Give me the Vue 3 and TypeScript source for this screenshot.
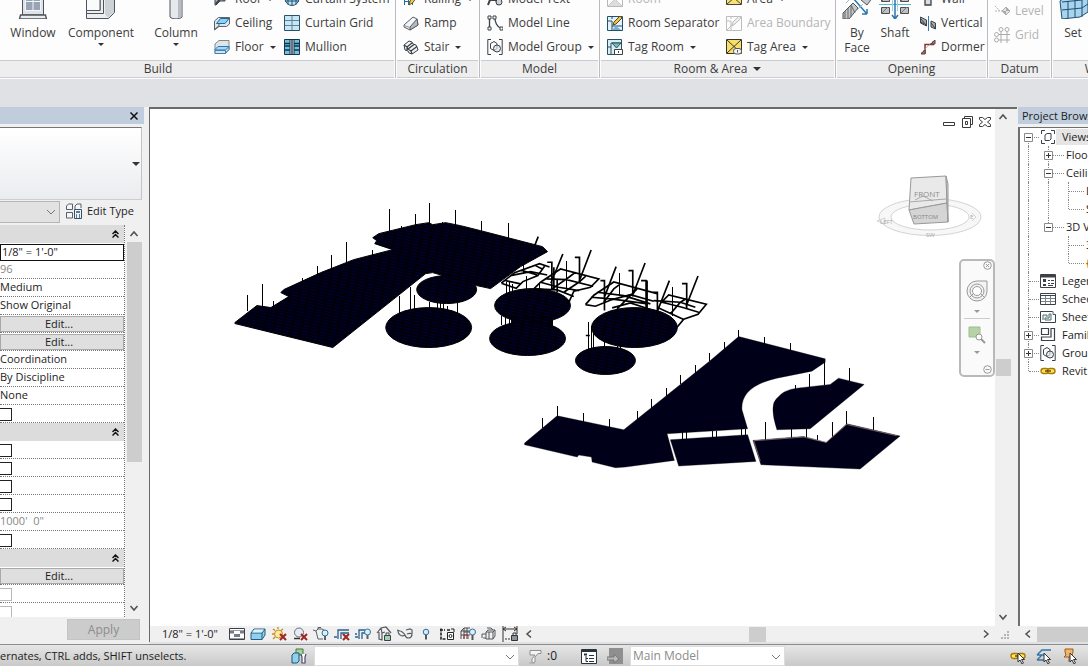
<script setup lang="ts">
import { ref } from 'vue'

interface Tool { icon: string; label: string; menu?: boolean; off?: boolean }
interface Big { icon: string; label: string; menu?: boolean; width: number }
interface Prop { kind: 'head' | 'input' | 'text' | 'edit' | 'check'; value?: string; name: string; dim?: boolean }
interface Node { label: string; depth: number; icon?: string; box?: '+' | '-'; bold?: boolean; sel?: boolean; last?: boolean }

const K = '#3b4148'
const icons: Record<string, string> = {
  roof: `<path d="M1 2h14v6l-4-1v3H6l-4 4H1z" fill="#a9b1ba" stroke="${K}"/><path d="M2 13l5-6 3 2" fill="none" stroke="${K}" stroke-width="2"/>`,
  ceiling: `<path d="M.5 6l4-3.500h11v6.500l-3 2.500H5L.500 15z" fill="#dfe5ea" stroke="#59636c"/><path d="M2.500 8.500l4-5h8.500l-4 5z" fill="#8fd0f5" stroke="#246a99"/><path d="M5 12V9M.500 14.500l4-3.500" stroke="#59636c"/>`,
  floor: `<path d="M1 5l4-3.500h10v9L11 14.500H1z" fill="#dfe4e9" stroke="#7d8790"/><path d="M1 10.500l3-3h11l-3.500 3.500H1z" fill="#a5d6f5" stroke="#2a78b0"/><path d="M1 11.500h10.500v3H1z" fill="#cfe5f4" stroke="#4381ac"/><path d="M11.500 14.500l3.500-4V7.500" fill="none" stroke="#4381ac"/>`,
  csystem: `<circle cx="8" cy="7.500" r="7" fill="#bfe2f5" stroke="#1d5273"/><path d="M8 .5v14M4 1.500v12M12 1.500v12M1 5h14M1 10h14" stroke="#1d5273" fill="none"/>`,
  cgrid: `<path d="M.500.500h15v15H.500z" fill="#c7e7f6" stroke="#2c5268"/><path d="M8 1v14M1 5.500h14M1 10.500h14" stroke="#5b8498"/>`,
  mullion: `<path d="M.500.500h15v15H.500z" fill="#71c1e6" stroke="#173547"/><path d="M6 .500h4v15H6z" fill="#eef7fb" stroke="#173547"/><path d="M8 1v14M1 4.500h5M10 4.500h5M1 7h5M10 7h5M1 11h5M10 11h5" stroke="#173547" stroke-width="1.300"/>`,
  railing: `<path d="M1.500 1v13M5.500 2v12M9.500 5v9M1 5.500h9M1 10.500h9" stroke="#236c94" fill="none"/><path d="M6 14l1-4 6-8 2.500 2-6 8z" fill="#f3c85a" stroke="#6b5320"/>`,
  ramp: `<path d="M1 10L10 2l4 2 1 6-8 5-6-3z" fill="#f4f5f6" stroke="#575e65"/><path d="M7 15v-3l7-8 1 6z" fill="#b3b9be" stroke="#575e65"/><path d="M1 10.500l6 2" fill="none" stroke="#8b9299"/>`,
  stair: `<path d="M1 6l5-4 3 1 1 2 3 1 1 2 1 3-6 4-3-1-1-2-3-1z" fill="#f0f2f4" stroke="${K}"/><path d="M1 6l3 2 5-4M4 8l1 2 6-4.500M5 10l3 2 6-4.500M8 12l1 3M4 8v3" fill="none" stroke="${K}" stroke-width="1.200"/>`,
  mtext: `<path d="M1 14L6 1l5 13M3 9h6" fill="none" stroke="${K}" stroke-width="2"/><circle cx="12" cy="11" r="3" fill="#ccd1d6" stroke="${K}"/>`,
  mline: `<path d="M2.500 3v10M7.500 2c1 6 2 9 6 11" fill="none" stroke="${K}" stroke-width="1.300"/><path d="M1 1h3v3H1zM1 12h3v3H1zM6 1h3v3H6zM13 12h3v3h-3z" fill="#fff" stroke="${K}"/>`,
  mgroup: `<path d="M4 .500H.800v15H4M12 .500h3.200v15H12" fill="none" stroke="${K}"/><path d="M3.500 4.500L7 2.500l3 2v5l-3 2-3.500-2z" fill="#fff" stroke="${K}"/><circle cx="10" cy="9.500" r="3.500" fill="#dde3e8" fill-opacity=".7" stroke="${K}"/>`,
  room: `<path d="M.500.500h15v15H.500zM1 15L15 1M1 1l14 14" fill="none" stroke="#b9b9b9"/><path d="M8 8l7 7H1z" fill="#ddd"/>`,
  rsep: `<path d="M.500 1.500h15v14H.500z" fill="#e3f1f8" stroke="#25506b"/><path d="M1 6h4v9M5 1v3M5 11h10" fill="none" stroke="#25506b"/><path d="M5 15l4-4 5 4z" fill="#6fb3d8"/><path d="M6 10l1-3 6-6 2 2-6 6z" fill="#f1c24c" stroke="#5d4a20"/>`,
  troom: `<path d="M.500.500h14v15H.500z" fill="#dcecf1" stroke="#25506b"/><path d="M4 4v11M4 4h10M1 8h3" fill="none" stroke="#25506b"/><path d="M5 4h9l-4.500 5z" fill="#7fbba9" stroke="#25506b"/><path d="M7.500 10.500h8v5h-8z" fill="#fff" stroke="${K}"/><path d="M11.500 12v2" stroke="${K}"/>`,
  area: `<path d="M.500.500h15v13H.500z" fill="#f7e27a" stroke="#4a4430"/><path d="M1 13L15 1M1 1l14 12" stroke="#4a4430" fill="none"/>`,
  abound: `<path d="M.500 1.500h15v14H.500zM1 6h4v9M5 1v3M1 15L15 1" fill="none" stroke="#bdbdbd"/><path d="M6 11l1-4 6-6 2 2-6 6z" fill="#eee" stroke="#bdbdbd"/>`,
  tarea: `<path d="M.500.500h15v14H.500z" fill="#f7e06a" stroke="#37352a"/><path d="M1 14L15 1M1 1l14 13" stroke="#37352a" fill="none"/><rect x="7.500" y="9.500" width="8" height="5.500" rx="2.500" fill="#f1f1f1" stroke="#54585c"/><path d="M11.500 11v2.500" stroke="#54585c"/>`,
  wall: `<path d="M1 2h4M11 2h4M5 8h6v6H5z" fill="#ddd" stroke="${K}" stroke-width="1.300"/>`,
  vertical: `<path d="M.500 2l6 3v6l-6-3zM11 6l4.500 2v6L11 12z" fill="#a5aab0" stroke="${K}"/><path d="M1 4l5 6M1 7l3 2M11 8l4 5" stroke="${K}"/><path d="M8.500 1v15" stroke="#3878ae"/>`,
  dormer: `<path d="M5 15V5.500h9" fill="none" stroke="#873532" stroke-width="1.500"/><path d="M1 15l4-4v4zM11 5l4-4v4z" fill="#888" stroke="#6b3a38"/><path d="M1 14L14 1" stroke="#b98b88" stroke-dasharray="2 1"/>`,
  level: `<path d="M1 3l5 5M1 8h14" stroke="#b5b5b5" stroke-dasharray="2 1"/><path d="M12 4l4 4-4 4-4-4z" fill="#e5e5e5" stroke="#aaa"/><path d="M12 4v4h4zM12 12V8H8z" fill="#aaa"/>`,
  grid: `<g fill="none" stroke="#ababab"><circle cx="7" cy="2.500" r="2"/><circle cx="13" cy="2.500" r="2"/><circle cx="2.500" cy="7.500" r="2"/><circle cx="2.500" cy="13" r="2"/><path d="M7 5v11M13 5v11M5 7.500h11M5 13h11"/></g>`,
  views: `<path d="M5 1.500H1.500V5M11 1.500h3.500V5M5 14.500H1.500V11M11 14.500h3.500V11" fill="none" stroke="${K}"/><path d="M5 6l2-1.500h4V10l-1.500 1.500H5z" fill="#fff" stroke="${K}"/>`,
  legend: `<path d="M.500 1.500h15v13H.500z" fill="#fff" stroke="${K}"/><path d="M1 3h14" stroke="${K}" stroke-width="3"/><path d="M3 6h3v3H3zM3 11h3v2H3z" fill="${K}"/><path d="M8 7.500h2M11 7.500h3M8 10.500h2M11 10.500h3M8 12.500h5" stroke="${K}"/>`,
  sched: `<path d="M.500 2.500h15v11H.500z" fill="#fff" stroke="${K}"/><path d="M1 4.500h14" stroke="${K}"/><path d="M1 7.500h14M1 10.500h14M5.500 5v8M10.500 5v8" stroke="#7c8288"/>`,
  sheet: `<path d="M.500 2.500h12l3 3v8H.500z" fill="#fff" stroke="${K}"/><path d="M3 11V6h4v2M5 11V9h4V5h2v6zM13 2.500v3h3" fill="#eef3f4" stroke="#4c6a70"/>`,
  family: `<path d="M1.500 1.500h7v6h-7zM11 1.500h3.500v12h-13V10H11z" fill="#fff" stroke="${K}" stroke-width="1.200"/>`,
  link: `<rect x="1" y="5.500" width="7.500" height="5" rx="2.500" fill="#ffe15a" stroke="#a67c08" stroke-width="1.400"/><rect x="7.500" y="5.500" width="7.500" height="5" rx="2.500" fill="#ffe15a" stroke="#a67c08" stroke-width="1.400"/><path d="M5 8h6" stroke="#5d4700" stroke-width="1.400"/>`,
  edittype: `<path d="M.500 3l2-2h4v5.500h-6zM9 6V3l2-2h4v4M.500 9.500h6v5.500h-6z" fill="#f4f6f8" stroke="#56606a"/><path d="M8.500 6.500h7v9h-7z" fill="#eaf3fa" stroke="#34506b"/><path d="M10 9h4M10 12h1M13 12h1M10 14h1M13 14h1" stroke="#34506b" stroke-width="1.300"/>`,
  detail: `<path d="M.500 2.500h15v11H.500z" fill="#fff" stroke="${K}"/><path d="M1 4.500h4v3H1zM11 4.500h4v3h-4zM5 8h6v3H5z" fill="#777d83"/><path d="M1 4.500h14M1 12.500h14" stroke="#9aa0a6"/>`,
  style: `<path d="M1 7l3-4h11v6l-3 4.500H1z" fill="#8ed0f2" stroke="#2a5d7d"/><path d="M1 7h11v6.500M12 7l3-4" fill="none" stroke="#2a5d7d"/><path d="M2 6.500L4.500 3.500h9.500l-2.500 3z" fill="#dff2fc"/>`,
  sun: `<path d="M7 1v2M2 3l2 1.500M1 8h2M2 13l2-2M12 3l-2 1.500" stroke="#c18b1c" stroke-width="1.300"/><circle cx="7.500" cy="8" r="4" fill="#ffe9a0" stroke="#c18b1c"/><path d="M9 8l6 6M15 8l-6 6" stroke="#9d2620" stroke-width="2"/>`,
  shadow: `<circle cx="7" cy="6.500" r="4.500" fill="#e4eef4" stroke="#67727b"/><path d="M2 12.500h6" stroke="#333" stroke-width="1.500"/><path d="M9 8l6 6M15 8l-6 6" stroke="#9d2620" stroke-width="2"/>`,
  render: `<path d="M0 4l3 1 2-2h4l2 1M3 5l2 8h5M5 3V1.500h3" fill="none" stroke="#5a6067"/><circle cx="12" cy="7" r="3" fill="#d4effd" stroke="#386e93"/><path d="M12 10v4" stroke="#5a6067" stroke-width="2"/>`,
  crop: `<path d="M0 11h3M4 13V4h11M7 13V7h8" fill="none" stroke="#27618f" stroke-width="1.300"/><path d="M9 8l6 6M15 8l-6 6" stroke="#9d2620" stroke-width="2"/>`,
  cropshow: `<path d="M0 11h3M4 13V4h6M7 13V7h3M0 8h2" fill="none" stroke="#27618f" stroke-width="1.300"/><circle cx="12.500" cy="6" r="3" fill="#d4effd" stroke="#386e93"/><path d="M12.500 9v4" stroke="#5a6067" stroke-width="2"/>`,
  lockview: `<path d="M1 7l4-5 5-1 5 6M3 6v7l3 1V7L5 2M6 7l3-1" fill="none" stroke="#54585c" stroke-width="1.200"/><path d="M8.500 9.500h6v5h-6z" fill="#9fd1b4" stroke="${K}"/><path d="M10 9V7h3v2" fill="none" stroke="${K}"/>`,
  glasses: `<path d="M0 4l3 1c1 0 4 2 5 4M1 5c0 4 4 6 7 4M8 9c1 4 6 4 7 0 0-2-3-2-5-1M9 4l4-1 2 1v4" fill="none" stroke="#5a6067" stroke-width="1.200"/>`,
  bulb: `<circle cx="8" cy="6" r="2.800" fill="#c9ecff" stroke="#386e93"/><path d="M8 9v4.500" stroke="#54585c" stroke-width="2"/>`,
  temp: `<path d="M1 4h5M2 2.500V13h5M8 4h4" fill="none" stroke="#222" stroke-width="1.600" stroke-dasharray="3 1"/><path d="M8.500 6.500h6v7h-6z" fill="#fff" stroke="#222"/><circle cx="11.500" cy="10" r="1.500" fill="none" stroke="#222"/><path d="M12 3h3v3" fill="none" stroke="#222"/>`,
  analytic: `<path d="M1 13V5l3-3h6M4 13V6h6M7 13V6M1 9h9M1 5h9M4 2v4M7 2v4" fill="none" stroke="#4b4a50"/><path d="M4 13V9h4v4" fill="none" stroke="#9d3d3a"/><circle cx="12.500" cy="6" r="3" fill="#d4effd" stroke="#386e93"/><path d="M12.500 9v5" stroke="#555" stroke-width="2"/>`,
  displace: `<path d="M5 6l2-2h7v6l-2 3H5zM5 6h7v7M12 6l2-2M8 6v7M1 8h4M2 12h3M1 8v4M6 2h4l2 2" fill="none" stroke="#54585c"/>`,
  reveal: `<path d="M1 0v16M15 0v8M1 3h14M4 1L1 3l3 2M12 1l3 2-3 2" fill="none" stroke="#333"/><path d="M3 13h5" stroke="#333" stroke-dasharray="2 1"/><path d="M9.500 9.500h6v5h-6z" fill="#8d9499" stroke="#333"/><path d="M11 9V7h3v2" fill="none" stroke="#333"/>`,
  worksets: `<path d="M5 1h7v6H5z" fill="#a7d49a" stroke="#3e7747"/><path d="M1 7l2-2h5v8l-2 2H1z" fill="#8ed0f0" stroke="#1f5573"/><path d="M10 6l1 3v6h3V9l1-3" fill="#fff" stroke="#4b4a70" stroke-width="1.200"/>`,
  filter: `<path d="M3 2.500h11v3h-3L8 9v5l-3 1v-4l3-4H3z" fill="#f4f4f4" stroke="#8f8f8f"/><path d="M2 15h6" stroke="#aaa"/>`,
  options: `<path d="M.500 1.500h15v14H.500z" fill="#fff" stroke="#26343d"/><path d="M1 3h14" stroke="#26343d" stroke-width="2"/><path d="M3 5.500h3v2H3z" fill="#26343d"/><path d="M8 7.500h5M8 10.500h5M5 8v5.500h2M5 10.500h2M8 13.500h5" fill="none" stroke="#26343d"/>`,
  addopt: `<path d="M2 0h14v16H2z" fill="#8f8f8f"/><path d="M0 9h7V6l5 5-5 4v-3H0z" fill="#b9b9b9" stroke="#777"/>`,
  selunder: `<path d="M1 7l5-5h9M1 7h8M1 12l5-5M1 12h7" fill="none" stroke="#3276a8" stroke-width="1.400"/>`,
  selpin: `<path d="M3 1h8v3l-1 3 2 2H2l2-2-1-3zM7 9v5" fill="#f3b469" stroke="#985d1c"/>`,
  cursor: `<path d="M8 5v9l2-2 2 4 1.500-1-2-3.500h3z" fill="#fff" stroke="#333"/>`,
  window: `<path d="M5.500-4h21v32h-21z" fill="#dfe3e9" stroke="#4d545b"/><path d="M8 0h16v24H8z" fill="#f3f5f7"/><path d="M9 0h14v23H9z" fill="#98a4b3"/><path d="M9 14.500h14M16 0v24" stroke="#f3f5f7"/><path d="M3.500 28h25l1 4h-27z" fill="#e9ecef" stroke="#4d545b" stroke-width="1.400"/>`,
  component: `<path d="M1.500 0h28v25.500l-6 6h-22v-8H15V0z" fill="#eceef0" stroke="#4d545b"/><path d="M20 0h9v25l-6 6-3-4z" fill="#cdd2d7"/><path d="M1.500 26.500h17V0" fill="none" stroke="#4d545b"/><path d="M1.500 0v23.500H15V0" fill="#fafbfb" stroke="#4d545b"/>`,
  column: `<path d="M10-4h12v34c-2 2.500-10 2.500-12 0z" fill="#e6e8ea" stroke="#4d545b"/><path d="M18-4h3.500v34l-3.500 1z" fill="#b6bcc2"/>`,
  byface: `<path d="M1 0l7 6M21 0l8 4 2-3-8-8z" fill="#888" stroke="#555"/><path d="M2 26L12 16l5 5-9 11H2z" fill="#c3c6ca" stroke="#555"/><path d="M4 32v-8M7 32V21M10 30V19M14 26l-4-8" stroke="#666"/><path d="M20 13l7-8 5 5-6 8z" fill="#c3c6ca" stroke="#555"/><path d="M12 11l14 16M26 27v-5M26 27h-5" stroke="#2e74ad" stroke-width="1.500" fill="none"/><path d="M5 16l8-8M16 23l6-6" stroke="#8ac4cc"/>`,
  shaft: `<g fill="#bdc0c4" stroke="#4d4d4d"><path d="M2.500 8.500h8v6h-8zM21.500 8.500h8v6h-8zM2.500 20.500h8v6h-8zM21.500 20.500h8v6h-8z"/></g><path d="M0 17.500h32" stroke="#54bdd3"/><path d="M3 14l6-6M22 14l6-6M3 26l6-6M22 26l6-6" stroke="#777"/><path d="M13.500 8v16M18.500 8v16" stroke="#9bd0dd"/><path d="M16 0v31M13 28l3 4 3-4" stroke="#2e74ad" stroke-width="1.500" fill="none"/>`,
  set: `<path d="M3 14l8-6h20v17l-8 5-18 2z" fill="#a9d4ef" stroke="#1f4f70"/><path d="M5 15l20-2v17M25 13l6-5M11 14v17M18 13v17M5 23l20-2 6-4" stroke="#1f4f70" fill="none"/>`,
}

const buildBig: Big[] = [
  { icon: 'window', label: 'Window', width: 66 },
  { icon: 'component', label: 'Component', menu: true, width: 70 },
  { icon: 'column', label: 'Column', menu: true, width: 80 },
]
const build: Tool[] = [
  { icon: 'roof', label: 'Roof', menu: true }, { icon: 'ceiling', label: 'Ceiling' }, { icon: 'floor', label: 'Floor', menu: true },
]
const curtain: Tool[] = [
  { icon: 'csystem', label: 'Curtain System' }, { icon: 'cgrid', label: 'Curtain Grid' }, { icon: 'mullion', label: 'Mullion' },
]
const circulation: Tool[] = [
  { icon: 'railing', label: 'Railing', menu: true }, { icon: 'ramp', label: 'Ramp' }, { icon: 'stair', label: 'Stair', menu: true },
]
const model: Tool[] = [
  { icon: 'mtext', label: 'Model Text' }, { icon: 'mline', label: 'Model Line' }, { icon: 'mgroup', label: 'Model Group', menu: true },
]
const room: Tool[] = [
  { icon: 'room', label: 'Room', off: true }, { icon: 'rsep', label: 'Room Separator' }, { icon: 'troom', label: 'Tag Room', menu: true },
]
const area: Tool[] = [
  { icon: 'area', label: 'Area', menu: true }, { icon: 'abound', label: 'Area Boundary', off: true }, { icon: 'tarea', label: 'Tag Area', menu: true },
]
const opening: Tool[] = [
  { icon: 'wall', label: 'Wall' }, { icon: 'vertical', label: 'Vertical' }, { icon: 'dormer', label: 'Dormer' },
]
const datum: Tool[] = [{ icon: 'level', label: 'Level', off: true }, { icon: 'grid', label: 'Grid', off: true }]

interface Panel { title: string; cls: string; menu?: boolean; big: Big[]; cols: Tool[][] }
const panels: Panel[] = [
  { title: 'Build', cls: 'p-build', big: buildBig, cols: [build, curtain] },
  { title: 'Circulation', cls: 'p-circ', big: [], cols: [circulation] },
  { title: 'Model', cls: 'p-model', big: [], cols: [model] },
  { title: 'Room & Area', cls: 'p-room', menu: true, big: [], cols: [room, area] },
  { title: 'Opening', cls: 'p-open', big: [{ icon: 'byface', label: 'By Face', width: 38 }, { icon: 'shaft', label: 'Shaft', width: 38 }], cols: [opening] },
  { title: 'Datum', cls: 'p-datum', big: [], cols: [datum] },
  { title: 'Work Plane', cls: 'p-work', big: [{ icon: 'set', label: 'Set', width: 36 }], cols: [] },
]

const scale = ref('1/8" = 1\'-0"')
const props: Prop[] = [
  { kind: 'head', name: 'Graphics' },
  { kind: 'input', name: 'View Scale' },
  { kind: 'text', name: 'Scale Value', value: '96', dim: true },
  { kind: 'text', name: 'Detail Level', value: 'Medium' },
  { kind: 'text', name: 'Parts Visibility', value: 'Show Original' },
  { kind: 'edit', name: 'Visibility Overrides' },
  { kind: 'edit', name: 'Graphic Display Options' },
  { kind: 'text', name: 'Discipline', value: 'Coordination' },
  { kind: 'text', name: 'Show Hidden Lines', value: 'By Discipline' },
  { kind: 'text', name: 'Analysis Display Style', value: 'None' },
  { kind: 'check', name: 'Sun Path' },
  { kind: 'head', name: 'Extents' },
  { kind: 'check', name: 'Crop View' },
  { kind: 'check', name: 'Crop Region Visible' },
  { kind: 'check', name: 'Annotation Crop' },
  { kind: 'check', name: 'Far Clip Active' },
  { kind: 'text', name: 'Far Clip Offset', value: "1000'  0\"", dim: true },
  { kind: 'check', name: 'Section Box' },
  { kind: 'head', name: 'Camera' },
  { kind: 'edit', name: 'Rendering Settings' },
  { kind: 'check', name: 'Locked Orientation', dim: true },
  { kind: 'check', name: 'Perspective', dim: true },
]

const tree: Node[] = [
  { label: 'Views (all)', depth: 0, icon: 'views', box: '-', sel: true },
  { label: 'Floor Plans', depth: 1, box: '+' },
  { label: 'Ceiling Plans', depth: 1, box: '-' },
  { label: 'Level 1', depth: 2 },
  { label: 'Site', depth: 2, last: true },
  { label: '3D Views', depth: 1, box: '-', last: true },
  { label: '3D View 1', depth: 2 },
  { label: '{3D}', depth: 2, bold: true, last: true },
  { label: 'Legends', depth: 0, icon: 'legend' },
  { label: 'Schedules/Quantities', depth: 0, icon: 'sched' },
  { label: 'Sheets (all)', depth: 0, icon: 'sheet' },
  { label: 'Families', depth: 0, icon: 'family', box: '+' },
  { label: 'Groups', depth: 0, icon: 'mgroup', box: '+' },
  { label: 'Revit Links', depth: 0, icon: 'link', last: true },
]

const viewTools = ['detail', 'style', 'sun', 'shadow', 'render', 'crop', 'cropshow', 'lockview', 'glasses', 'bulb', 'temp', 'analytic', 'displace', 'reveal']

type Post = [number, number, number]
const postsA: Post[] = [[79, 312, 362], [124, 279, 348], [157, 330, 350], [244, 262, 275], [289, 227, 255], [331, 192, 236], [376, 155, 218], [454, 177, 195], [505, 54, 128], [541, 105, 116], [585, 71, 110], [628, 36, 105], [665, 93, 105], [706, 57, 108], [742, 110, 120], [535, 315, 370], [568, 288, 358], [580, 312, 356], [625, 333, 354], [712, 336, 366], [650, 338, 354], [659, 338, 356], [670, 340, 356], [682, 345, 358]]
const postsB: Post[] = [[34, 0, 38], [70, 40, 48], [115, 6, 60], [94, 285, 312], [106, 290, 312], [117, 296, 310], [240, 290, 310], [246, 295, 320], [108, 185, 220], [117, 180, 220], [126, 190, 220], [160, 120, 160], [168, 165, 210], [206, 190, 215], [289, 120, 205], [448, 156, 225], [607, 198, 285], [355, 303, 385], [363, 315, 385], [369, 330, 385], [403, 360, 380], [440, 375, 382], [450, 372, 382]]
const postsC: Post[] = [[97, 322, 352], [142, 288, 320], [220, 307, 336], [298, 327, 352], [380, 303, 330], [424, 265, 292], [467, 232, 258], [511, 195, 222], [555, 162, 188], [598, 126, 152], [643, 93, 118], [685, 57, 80], [763, 79, 100], [841, 96, 120], [943, 152, 224], [898, 192, 230], [856, 225, 236], [1018, 174, 212], [766, 334, 388], [845, 355, 382], [889, 352, 382], [922, 373, 388], [967, 336, 382], [1009, 303, 345], [1090, 321, 360], [517, 365, 386], [528, 366, 386], [607, 362, 382], [618, 362, 382], [695, 357, 376], [706, 357, 376]]
</script>

<template>
  <div class="app">
    <header class="ribbon">
      <section v-for="p in panels" :key="p.title" class="panel" :class="p.cls">
        <div class="tools">
          <button v-for="b in p.big" :key="b.label" class="big" type="button" :style="{ width: b.width + 'px' }">
            <svg width="32" height="32" viewBox="0 0 32 32" v-html="icons[b.icon]" />
            <span>{{ b.label }}</span>
            <i v-if="b.menu" class="tri" />
          </button>
          <div v-for="(c, i) in p.cols" :key="i" class="col">
            <button v-for="t in c" :key="t.label" class="tool" type="button" :disabled="t.off">
              <svg width="16" height="16" viewBox="0 0 16 16" v-html="icons[t.icon]" />
              <span>{{ t.label }}</span>
              <i v-if="t.menu" class="tri" />
            </button>
          </div>
        </div>
        <h2>{{ p.title }}<i v-if="p.menu" class="tri wide" /></h2>
      </section>
    </header>

    <main class="work">
      <aside class="props">
        <div class="bar end">
          <button type="button" aria-label="Close properties"><svg width="10" height="10" viewBox="0 0 10 10"><path d="M1.500 1.500l7 7M8.500 1.500l-7 7" stroke="#111" stroke-width="1.500" /></svg></button>
        </div>
        <button class="type" type="button" aria-label="Type selector"><i class="tri wide" /></button>
        <div class="typerow">
          <span class="combo">
            <select aria-label="View type"><option></option></select>
            <svg width="10" height="6" viewBox="0 0 10 6"><path d="M1 1l4 4 4-4" /></svg>
          </span>
          <button class="edittype" type="button"><svg width="16" height="16" viewBox="0 0 16 16" v-html="icons.edittype" />Edit Type</button>
        </div>
        <div class="gridbox">
          <div class="rows">
            <div v-for="p in props" :key="p.name" class="row" :class="[p.kind, { dim: p.dim }]">
              <svg v-if="p.kind === 'head'" width="7" height="8" viewBox="0 0 7 8"><path d="M.500 4L3.500 1l3 3M.500 7.500L3.500 4.500l3 3" fill="none" stroke="#111" stroke-width="1.500" /></svg>
              <input v-else-if="p.kind === 'input'" v-model="scale" type="text" :aria-label="p.name">
              <button v-else-if="p.kind === 'edit'" type="button" :aria-label="p.name + ' Edit...'">Edit...</button>
              <input v-else-if="p.kind === 'check'" type="checkbox" :aria-label="p.name" :disabled="p.dim">
              <span v-else>{{ p.value }}</span>
            </div>
          </div>
          <div class="vscroll">
            <svg width="10" height="17" viewBox="0 0 10 17"><path d="M1.500 11L5 7l3.500 4" /></svg>
            <i class="thumb" />
            <svg width="10" height="17" viewBox="0 0 10 17"><path d="M1.500 6L5 10l3.500-4" /></svg>
          </div>
        </div>
        <div class="applyrow"><button type="button" disabled>Apply</button></div>
      </aside>

      <section class="view">
        <div class="stage">
          <div class="canvas">
            <svg class="scene" viewBox="149 109 846 516" preserveAspectRatio="xMidYMid meet">
              <defs>
                <pattern id="mesh" width="9" height="6" patternUnits="userSpaceOnUse" patternTransform="rotate(12)">
                  <rect width="9" height="6" fill="#00003a" />
                  <path d="M0 1h9M0 4h9M2 0v6" stroke="#000008" stroke-width="2" />
                </pattern>
              </defs>
              <g class="solid">
                <path d="M234 322l22-17 14 2 18-11-8-4 3-3 37-17 33-13 39-10-18-6 2-3-4-3 6-4 37-9 13-2 4 2 13-2 15 3 20 5 62 16 5 5-27 15-30 22-14-3-44-13-7 1-93 74-98-24z" />
                <ellipse cx="446" cy="289" rx="30" ry="14" />
                <ellipse cx="428" cy="327" rx="43" ry="20" />
                <ellipse cx="532" cy="305" rx="38" ry="17" />
                <path d="M511 317h40v8h-40z" />
                <ellipse cx="527" cy="338" rx="38" ry="17" />
                <ellipse cx="634" cy="327" rx="43" ry="20" />
                <ellipse cx="605" cy="360" rx="30" ry="14" />
              </g>
              <g transform="translate(220 190) scale(.33333)" class="posts">
                <path v-for="(q, i) in postsA" :key="i" :d="`M${q[0]} ${q[1]}V${q[2]}`" />
              </g>
              <g transform="translate(470 220) scale(.33333)">
                <g class="posts"><path v-for="(q, i) in postsB" :key="i" :d="`M${q[0]} ${q[1]}V${q[2]}`" /></g>
                <path class="frame" d="M92 188l40-32 75-27 30 10M120 165l60-12 50 10M92 188l45 15 20-20 45-18 20-28M105 180l45 10M150 148l50 15M190 205l20-20 60-40 115 30-25 25-50 12-18 40M210 185l55 15 60 10M228 175l60 2 80 20M245 205l50-35 20-15M280 215l45-30 20-18M190 205l70 3 50 20M345 252l25-28 60-40 130 35M345 252l30 5 50-20 55-15 70 20M362 230l60 5 110 15M380 215l80 10 80 25M400 245l30-40 20-15M440 265l40-40 20-20M425 262l55-15 60 20M570 248l25-25 113 28-25 30-43 15-20 24M575 245l60 15 50 15M565 262l75 35M600 280l30-35 20-12M550 240l80 5 45 15" />
                <path class="rod" d="M203 48l-10 26M230 125h14v80M277 100l-36 88M313 110h14v75M362 88l-36 94M390 180h12v90M437 138l-36 94M474 150h13v78M524 127l-36 94M512 180h15v90M530 180v85M548 215h13v70M597 180l-36 92M635 189h14v74M683 166l-36 92M250 140v65M195 135l20 10M260 175v40M346 345h12" />
              </g>
              <g transform="translate(510 310) scale(.33333)">
                <g class="solid">
                  <path d="M42 398l98-82 200 42 260-208 85-72 260 67v10l-40 27-105 21q-110 25-105 95l17 57-242 15 22 80-147 20-30 2-70-17-2-15-38-6-5 6-158-37z" />
                  <path d="M480 388l232-15 25 80-232 14z" />
                  <path d="M728 390l152-12 68 18 62-56 160 37-120 99-298-13z" />
                  <path d="M800 358q-24-75 0-95 20-25 60-30l100-11 25-19 77 19-162 133z" />
                </g>
                <g class="posts"><path v-for="(q, i) in postsC" :key="i" :d="`M${q[0]} ${q[1]}V${q[2]}`" /></g>
                <path d="M732 391l148-11 68 16 62-54 150 34M731 392l19 60" fill="none" stroke="#a88" stroke-width="2" />
              </g>
            </svg>

            <div class="mdi">
              <button type="button" aria-label="Minimize"><svg width="14" height="14" viewBox="0 0 14 14"><path d="M1.500 7.500h11v3h-11z" /></svg></button>
              <button type="button" aria-label="Restore"><svg width="14" height="14" viewBox="0 0 14 14"><path d="M4.500 3.500v-2h8v8h-2M2.500 3.500h8v9h-8zM5.500 6.500h2v3h-2z" /></svg></button>
              <button type="button" aria-label="Close view"><svg width="14" height="14" viewBox="0 0 14 14"><path d="M1.500 2.500h3l2.500 2 2.500-2h3v2l-3 2.500 3 2.500v2h-3l-2.500-2-2.500 2h-3v-2l3-2.500-3-2.500z" /></svg></button>
            </div>

            <svg class="cube" width="112" height="70" viewBox="874 172 112 70">
              <g fill="none" stroke="#d4d4d4">
                <ellipse cx="930" cy="217" rx="51" ry="18.500" fill="#f7f7f7" />
                <ellipse cx="930" cy="217" rx="39" ry="13" fill="#fff" />
                <path d="M877 221l8-3v6zM972 213l4 4-4 4" />
              </g>
              <path d="M911 178l35-2 1 27-38 7z" fill="#e9e9e9" stroke="#999" />
              <path d="M909 210l38-7 1 19-34 2z" fill="#d5d5d5" stroke="#999" />
              <path d="M946 176l2 8v38l-1-19z" fill="#ccc" stroke="#999" />
              <path d="M909 202l37-3M915 200l8-4 10 5" fill="none" stroke="#aaa" />
              <text x="914" y="197" font-size="8" fill="#8d8d8d">FRONT</text>
              <text x="913" y="219" font-size="6" fill="#888">BOTTOM</text>
              <g font-size="6" fill="#aaa"><text x="880" y="224">LEFT</text><text x="926" y="237">SW</text><text x="970" y="219">E</text></g>
            </svg>

            <div class="nav">
              <button class="corner" type="button" aria-label="Close navigation bar"><svg width="9" height="9" viewBox="0 0 9 9"><circle cx="4.500" cy="4.500" r="3.800" /><path d="M3 3l3 3M6 3L3 6" /></svg></button>
              <button type="button" aria-label="Steering wheel"><svg width="24" height="24" viewBox="0 0 24 24"><path d="M12 2h10v10a10 10 0 1 1-10-10z" fill="#f3f3f3" /><circle cx="12" cy="12" r="7" /><circle cx="12" cy="12" r="4.500" fill="#fff" /><path d="M5 18l3-3M19 18l-3-3" /></svg></button>
              <i class="tri pale" />
              <hr>
              <button type="button" aria-label="Zoom region"><svg width="18" height="18" viewBox="0 0 18 18"><path d="M1 1h11v10H1z" fill="#b6d3a8" stroke="#9fbd92" /><circle cx="11" cy="11" r="3" fill="#fff" /><path d="M13 13l4 4" stroke-width="2" /></svg></button>
              <i class="tri pale" />
              <button class="corner" type="button" aria-label="Navigation options"><svg width="9" height="9" viewBox="0 0 9 9"><circle cx="4.500" cy="4.500" r="3.800" /><path d="M2.500 4.500h4" /></svg></button>
            </div>
          </div>
          <div class="vscroll mid">
            <svg width="10" height="17" viewBox="0 0 10 17"><path d="M1.500 10L5 6l3.500 4" /></svg>
            <i class="thumb" />
            <svg width="10" height="17" viewBox="0 0 10 17"><path d="M1.500 6L5 10l3.500-4" /></svg>
          </div>
        </div>
        <div class="viewbar">
          <button class="scale" type="button">{{ scale }}</button>
          <button v-for="v in viewTools" :key="v" type="button" :aria-label="v"><svg width="16" height="16" viewBox="0 0 16 16" v-html="icons[v]" /></button>
          <div class="hscroll">
            <svg width="10" height="10" viewBox="0 0 10 10"><path d="M7 1.500L3 5l4 3.500" /></svg>
            <i class="thumb" />
            <svg width="10" height="10" viewBox="0 0 10 10"><path d="M3 1.500L7 5 3 8.500" /></svg>
          </div>
          <svg class="grip" width="16" height="16" viewBox="0 0 16 16"><path d="M12 5h2v2h-2zM9 8h2v2H9zM12 8h2v2h-2zM6 11h2v2H6zM9 11h2v2H9zM12 11h2v2h-2z" fill="#b5b5b5" /></svg>
        </div>
      </section>

      <aside class="browser">
        <div class="bar">Project Browser</div>
        <ul class="tree">
          <li v-for="n in tree" :key="n.label" :class="['d' + n.depth, { bold: n.bold, sel: n.sel, last: n.last }]">
            <span v-if="n.depth > 0" class="guide on" />
            <span v-if="n.depth > 1" class="guide" :class="{ on: !n.label.includes('3D') }" />
            <span class="branch" :class="{ last: n.last }"><button v-if="n.box" type="button" :aria-label="'Toggle ' + n.label"><svg width="9" height="9" viewBox="0 0 9 9"><path d="M.500.500h8v8h-8z" fill="#fff" stroke="#8a8a8a" /><path :d="n.box === '+' ? 'M2 4.500h5M4.500 2v5' : 'M2 4.500h5'" stroke="#333" /></svg></button></span>
            <svg v-if="n.icon" width="16" height="16" viewBox="0 0 16 16" v-html="icons[n.icon]" />
            <b>{{ n.label }}</b>
          </li>
        </ul>
        <div class="hscroll side">
          <svg width="10" height="10" viewBox="0 0 10 10"><path d="M7 1.500L3 5l4 3.500" /></svg>
          <i class="thumb" />
        </div>
      </aside>
    </main>

    <footer class="status">
      <span class="hint">ernates, CTRL adds, SHIFT unselects.</span>
      <button class="chip" type="button" aria-label="Worksets"><svg width="16" height="16" viewBox="0 0 16 16" v-html="icons.worksets" /></button>
      <span class="combo ws">
        <select aria-label="Active workset"><option></option></select>
        <svg width="10" height="6" viewBox="0 0 10 6"><path d="M1 1l4 4 4-4" /></svg>
      </span>
      <span class="count"><svg width="16" height="16" viewBox="0 0 16 16" v-html="icons.filter" />:0</span>
      <button class="chip" type="button" aria-label="Design options"><svg width="16" height="16" viewBox="0 0 16 16" v-html="icons.options" /></button>
      <button class="chip" type="button" aria-label="Add to set"><svg width="16" height="16" viewBox="0 0 16 16" v-html="icons.addopt" /></button>
      <span class="combo dm">
        <select aria-label="Active design option"><option>Main Model</option></select>
        <svg width="10" height="6" viewBox="0 0 10 6"><path d="M1 1l4 4 4-4" /></svg>
      </span>
      <span class="right">
        <button class="chip" type="button" aria-label="Select links"><svg width="16" height="16" viewBox="0 0 16 16" v-html="icons.link + icons.cursor" /></button>
        <button class="chip" type="button" aria-label="Select underlay elements"><svg width="16" height="16" viewBox="0 0 16 16" v-html="icons.selunder + icons.cursor" /></button>
        <button class="chip" type="button" aria-label="Select pinned elements"><svg width="16" height="16" viewBox="0 0 16 16" v-html="icons.selpin + icons.cursor" /></button>
      </span>
    </footer>
  </div>
</template>

<style>
html, body { background: #e0e1e4; overflow: hidden; }
</style>

<style scoped>
.app { height: 100vh; display: flex; flex-direction: column; overflow: hidden; font: 11px/16px "Open Sans", "Noto Sans", sans-serif; color: #1c1c1c; background: #e0e1e4; }
.app * { box-sizing: border-box; }
button { font: inherit; color: inherit; background: none; border: 0; padding: 0; margin: 0; display: flex; align-items: center; }
svg { flex: none; display: block; }
.tri { flex: none; border: 3px solid transparent; border-top-color: #333; border-bottom: 0; }
.tri.wide { border-width: 4px; border-bottom-width: 0; }
.tri.pale { border-top-color: #999; }

.ribbon { flex: none; display: flex; background: #fdfdfd; border-bottom: 1px solid #fff; font-size: 12px; color: #3c3c3c; overflow: hidden; }
.panel { flex: none; display: flex; flex-direction: column; border-right: 1px solid #b9bbbf; }
.panel h2 { margin: 0 1px; height: 18px; display: flex; align-items: center; justify-content: center; gap: 6px; font-size: 12px; font-weight: 400; background: #eee; border-top: 1px solid #c9ccd2; border-bottom: 1px solid #c9ccd2; }
.tools { height: 60px; display: flex; align-items: flex-end; overflow: hidden; padding-bottom: 1px; }
.col { flex: none; height: 72px; display: flex; flex-direction: column; }
.tool { height: 24px; gap: 5px; white-space: nowrap; }
.tool .tri { margin-left: 1px; }
.tool:disabled { color: #b4b4b4; }
.big { flex: none; height: 72px; flex-direction: column; line-height: 15px; }
.big svg { margin-bottom: 6px; }
.big .tri { margin-top: 3px; }
.p-build { width: 396px; }
.p-build h2 { margin-left: 0; padding-right: 78px; }
.p-build .col:nth-of-type(1) { width: 70px; margin-left: -2px; }
.p-circ { width: 84px; }
.p-circ .col, .p-model .col { margin-left: 7px; }
.p-model { width: 120px; }
.p-room { width: 236px; }
.p-room .col { margin-left: 7px; width: 112px; }
.p-open { width: 152px; }
.p-open .col { margin-left: 6px; }
.p-open .big:first-child { margin-left: 2px; }
.p-datum { width: 64px; }
.p-datum .col { margin-left: 6px; padding-top: 12px; }
.p-work { flex: 1; min-width: 130px; }
.p-work .big { margin-left: 3px; }

.work { flex: 1; min-height: 0; display: flex; padding-top: 28px; }
.bar { flex: none; height: 17px; display: flex; align-items: center; background: #bfcddc; white-space: nowrap; overflow: hidden; }
.bar.end { justify-content: flex-end; padding-right: 5px; }

.props { flex: none; width: 149px; padding-right: 5px; display: flex; flex-direction: column; background: #f0f0f0; }
.type { height: 73px; margin: 3px 2px 0 0; flex: none; justify-content: flex-end; padding-right: 1px; border: solid #777; border-width: 1px 1px 1px 0; border-right-color: #c4c4c4; border-bottom-color: #ccc; background: linear-gradient(#fff, #ebecef); }
.typerow { flex: none; height: 25px; display: flex; align-items: flex-start; gap: 6px; padding-top: 1px; }
.combo { position: relative; display: flex; width: 60px; height: 22px; }
.combo select { flex: 1; min-width: 0; appearance: none; font: inherit; color: #8b8b8b; background: #e2e2e2; border: 1px solid #b5b5b5; border-left: 0; border-radius: 0; padding: 0 18px 0 2px; }
.combo svg { position: absolute; right: 4px; top: 8px; fill: none; stroke: #777; pointer-events: none; }
.edittype { gap: 5px; height: 20px; }
.gridbox { flex: 1; min-height: 0; display: flex; background: #f0f0f0; }
.rows { width: 125px; overflow: hidden; background: #fff; border-right: 1px dotted #777; }
.row { height: 18px; display: flex; align-items: center; border-bottom: 1px dotted #777; white-space: pre; overflow: hidden; }
.row span { margin-bottom: 2px; }
.row.head { justify-content: flex-end; padding-right: 5px; background: #dcdcdc; border-bottom-color: #dcdcdc; }
.row.dim { color: #888; }
.row.input { border: 0; }
.row input[type=text] { width: 100%; height: 17px; font: inherit; color: inherit; border: 1px solid #111; padding: 0 1px 2px; background: #fff; outline: 0; }
.row button { width: 100%; height: 16px; justify-content: center; background: #dfdfdf; border: 1px solid #a9a9a9; padding-right: 6px; }
.row input[type=checkbox] { appearance: none; flex: none; width: 14px; height: 13px; margin: 2px 0 0 -2px; border: 1px solid #222; background: #fff; }
.row.dim input { border-color: #b9b9b9; }
.vscroll { width: 16px; margin-left: 1px; display: flex; flex-direction: column; align-items: center; background: #f0f0f0; }
.vscroll svg, .hscroll svg { fill: none; stroke: #505050; stroke-width: 1.5; }
.vscroll .thumb { width: 15px; height: 56%; background: #cdcdcd; margin-bottom: auto; }
.applyrow { flex: none; height: 27px; display: flex; justify-content: flex-end; padding: 2px 4px 4px 0; }
.applyrow button { width: 73px; justify-content: center; background: #ccc; color: #8d8d8d; font-size: 12px; border: 1px solid #c4c4c4; }

.view { flex: 1; min-width: 0; display: flex; flex-direction: column; background: #f0f0f0; border: solid #6a6a6a; border-width: 2px 0 0 1px; margin-bottom: 2px; }
.stage { flex: 1; min-height: 0; display: flex; }
.canvas { position: relative; flex: 1; min-width: 0; background: #fff; overflow: hidden; }
.scene { width: 100%; height: 100%; }
.solid { fill: url(#mesh); stroke: #000; stroke-width: 1; }
.posts, .frame, .rod { fill: none; stroke: #000; stroke-width: 3; }
.posts { shape-rendering: crispEdges; }
.frame { stroke-width: 5; }
.rod { stroke-width: 5; }
.mdi { position: absolute; right: 3px; top: 6px; display: flex; gap: 4px; }
.mdi svg { fill: none; stroke: #3a3a3a; }
.cube { position: absolute; right: 9px; top: 63px; }
.nav { position: absolute; right: 0; top: 150px; width: 36px; height: 118px; display: flex; flex-direction: column; align-items: center; background: #fafafa; border: 2px solid #b9b9b9; border-radius: 5px; }
.nav svg { fill: none; stroke: #999; }
.nav .corner { align-self: flex-end; padding-right: 1px; }
.nav button:nth-of-type(2) { margin-top: 9px; }
.nav .tri { margin-top: 7px; }
.nav hr { width: 26px; border: 0; border-top: 1px solid #ccc; margin: 5px 0 7px; }
.nav .corner:last-child { margin-top: auto; padding-bottom: 1px; }
.vscroll.mid { margin: 0; margin-right: 6px; }
.vscroll.mid .thumb { height: 17px; margin: auto 0; }
.viewbar { flex: none; height: 16px; display: flex; align-items: center; gap: 5px; padding-right: 6px; }
.scale { width: 74px; padding-left: 12px; white-space: nowrap; }
.hscroll { flex: 1; height: 16px; display: flex; align-items: center; padding: 0 0 0 1px; }
.hscroll .thumb { width: 17px; height: 15px; background: #cdcdcd; margin: 0 auto; }
.grip { margin-left: -1px; }

.browser { flex: none; width: 71px; display: flex; flex-direction: column; background: #f0f0f0; margin-bottom: 2px; }
.browser .bar { margin-left: 1px; padding-left: 4px; }
.tree { flex: 1; min-height: 0; list-style: none; margin: 3px 0 0 1px; padding: 0; background: #fff; border: solid #6f6f6f; border-width: 1px 0 0 2px; overflow: hidden; }
.tree li { height: 18px; display: flex; align-items: center; white-space: nowrap; }
.tree b { font-weight: 400; padding-left: 6px; }
.tree .d1 b, .tree .d2 b { padding-left: 1px; }
.tree .sel b { background: #e5e5e5; flex: 1; }
.tree .bold b { font-weight: 700; color: #a0661a; }
.guide, .branch { flex: none; width: 20px; height: 18px; position: relative; display: flex; align-items: center; }
.guide.on::before, .branch::before { content: ""; position: absolute; left: 8px; top: 0; height: 100%; border-left: 1px dotted #888; }
.branch.last::before { height: 9px; }
.branch::after { content: ""; position: absolute; left: 9px; right: 1px; top: 9px; border-top: 1px dotted #888; }
.d1 .branch, .d2 .branch { width: 25px; }
.branch button { position: relative; z-index: 1; margin-left: 4px; }
.sel .branch::before { top: 9px; height: 9px; }
.hscroll.side { flex: none; margin-left: 6px; padding: 0; }
.hscroll.side .thumb { flex: 1; margin: 0 0 0 4px; }

.status { flex: none; height: 22px; display: flex; align-items: center; background: linear-gradient(#e6e6e6, #c9c9c9); border-top: 1px solid #8c8c8c; }
.hint { width: 286px; white-space: nowrap; }
.chip { width: 26px; height: 21px; justify-content: center; }
.status .combo { height: 20px; }
.status .combo select { background: #fff; border: 1px solid #ddd; font-size: 12px; }
.ws { width: 205px; margin-left: 2px; }
.ws + .count { width: 57px; padding-left: 8px; display: flex; align-items: center; gap: 4px; font-size: 12px; }
.status .dm { width: 155px; margin-left: 2px; }
.right { margin-left: auto; display: flex; padding-right: 5px; }
</style>
